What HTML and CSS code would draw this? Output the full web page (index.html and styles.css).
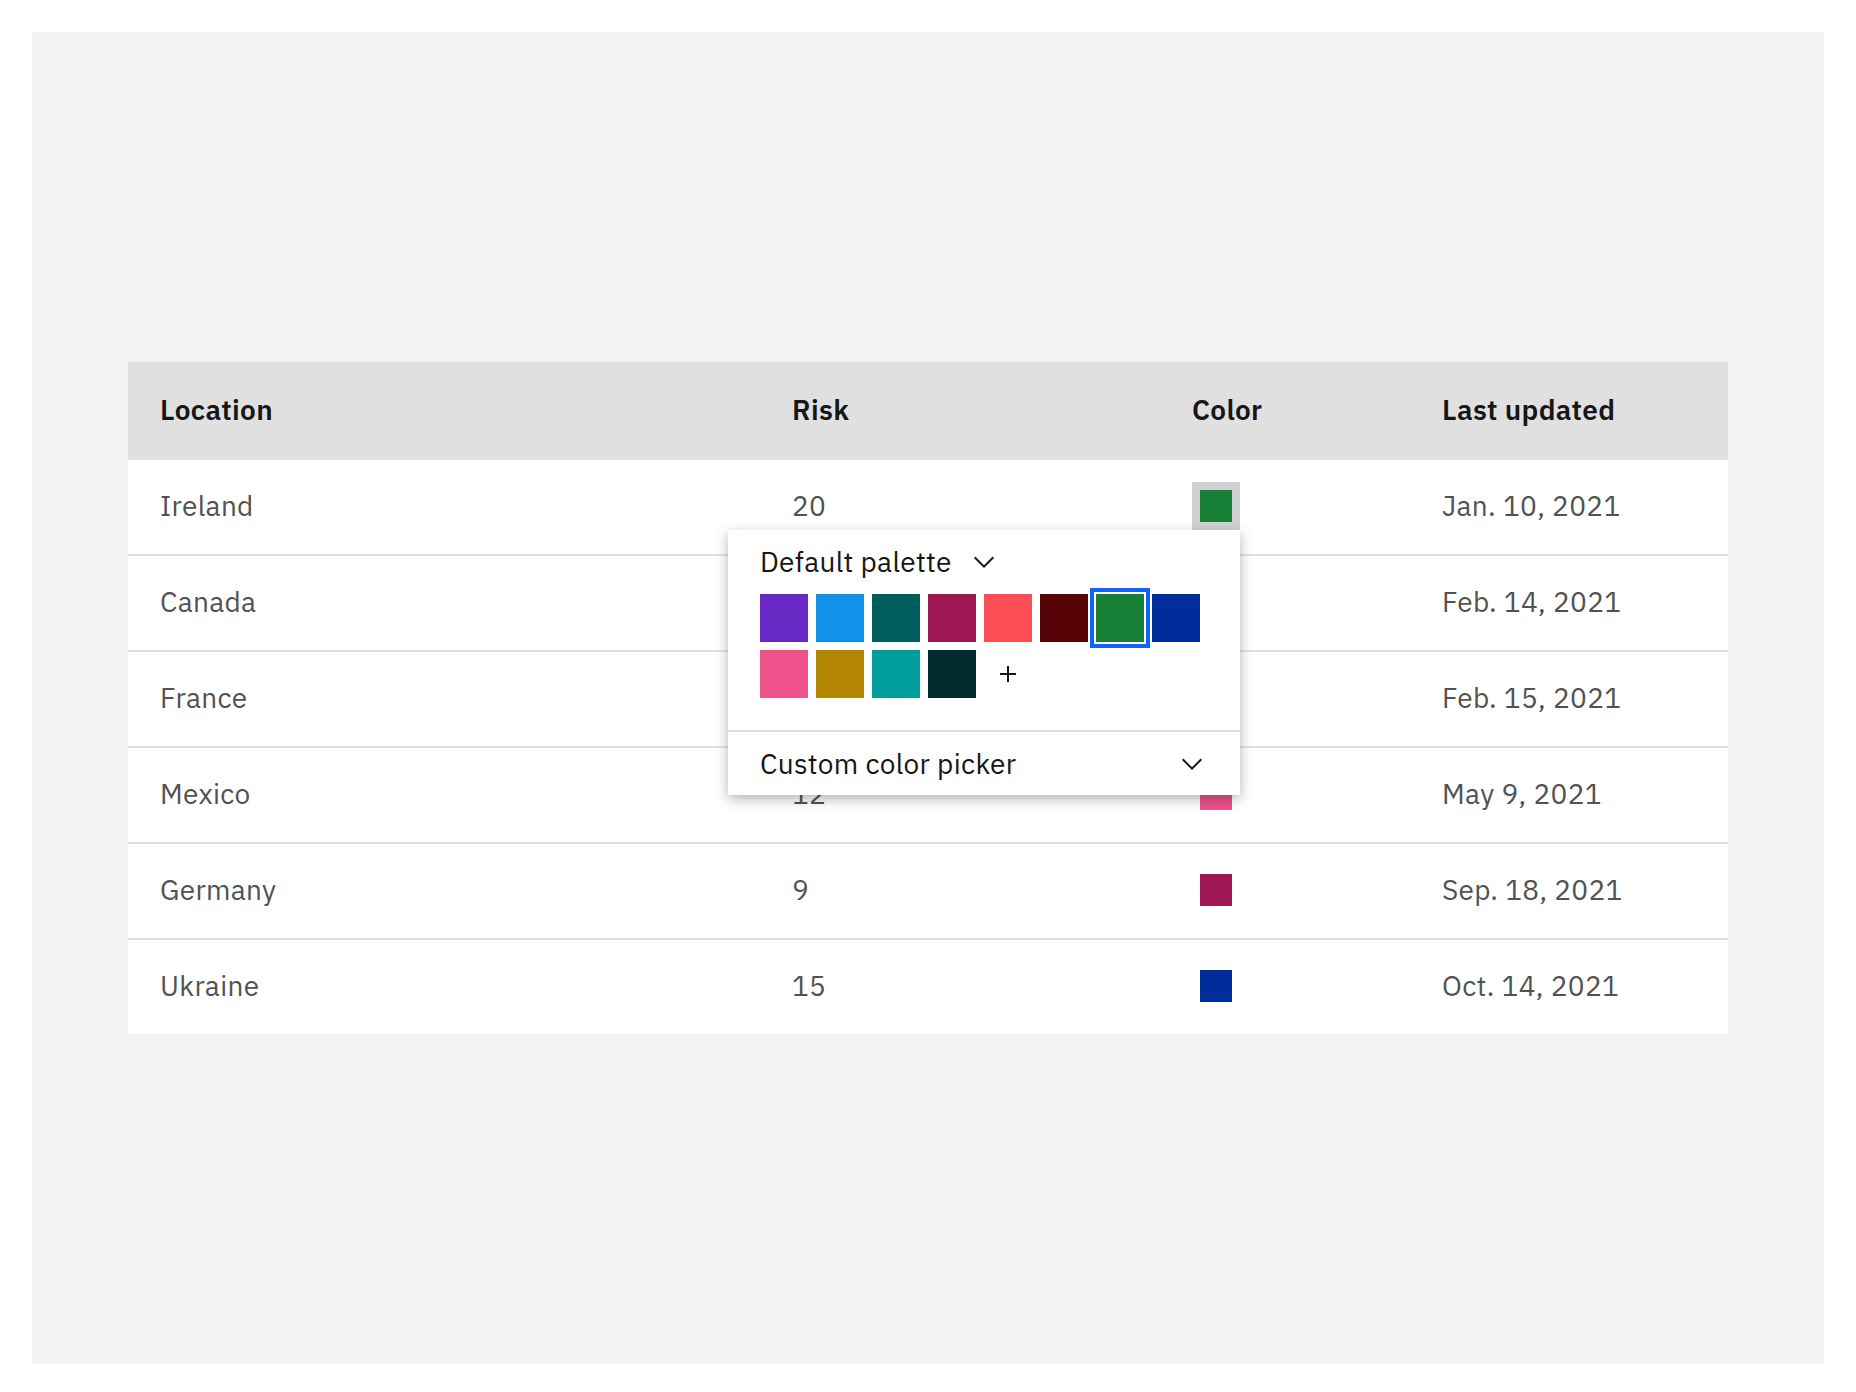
FILE: index.html
```html
<!DOCTYPE html>
<html lang="en">
<head>
<meta charset="utf-8">
<title>Color picker in data table</title>
<link rel="stylesheet" href="styles.css">
</head>
<body>
<main class="panel">
  <table class="data-table">
    <colgroup>
      <col class="col-location">
      <col class="col-risk">
      <col class="col-color">
      <col class="col-updated">
    </colgroup>
    <thead>
      <tr>
        <th>Location</th>
        <th>Risk</th>
        <th>Color</th>
        <th>Last updated</th>
      </tr>
    </thead>
    <tbody>
      <tr>
        <td>Ireland</td>
        <td>20</td>
        <td>
          <div class="swatch-anchor">
            <button class="swatch-btn is-active" type="button" aria-label="Green"><span class="swatch c-green"></span></button>
            <div class="popover">
              <div class="popover-top">
                <div class="palette-head">
                  <span>Default palette</span>
                  <svg class="chev" viewBox="0 0 32 32" width="32" height="32"><path d="M16 22L6 12l1.4-1.4 8.6 8.6 8.6-8.6L26 12z"/></svg>
                </div>
                <div class="palette">
                  <span class="chip c-purple"></span>
                  <span class="chip c-cyan"></span>
                  <span class="chip c-teal"></span>
                  <span class="chip c-magenta"></span>
                  <span class="chip c-red"></span>
                  <span class="chip c-darkred"></span>
                  <span class="chip c-green is-selected"></span>
                  <span class="chip c-blue"></span>
                  <span class="chip c-pink"></span>
                  <span class="chip c-yellow"></span>
                  <span class="chip c-teal50"></span>
                  <span class="chip c-teal90"></span>
                  <span class="add">
                    <svg viewBox="0 0 32 32" width="32" height="32"><path d="M17 15V8h-2v7H8v2h7v7h2v-7h7v-2z"/></svg>
                  </span>
                </div>
              </div>
              <div class="popover-bottom">
                <span>Custom color picker</span>
                <svg class="chev" viewBox="0 0 32 32" width="32" height="32"><path d="M16 22L6 12l1.4-1.4 8.6 8.6 8.6-8.6L26 12z"/></svg>
              </div>
            </div>
          </div>
        </td>
        <td>Jan. 10, 2021</td>
      </tr>
      <tr>
        <td>Canada</td>
        <td>17</td>
        <td><button class="swatch-btn" type="button" aria-label="Cyan"><span class="swatch c-cyan"></span></button></td>
        <td>Feb. 14, 2021</td>
      </tr>
      <tr>
        <td>France</td>
        <td>11</td>
        <td><button class="swatch-btn" type="button" aria-label="Purple"><span class="swatch c-purple"></span></button></td>
        <td>Feb. 15, 2021</td>
      </tr>
      <tr>
        <td>Mexico</td>
        <td>12</td>
        <td><button class="swatch-btn" type="button" aria-label="Pink"><span class="swatch c-pink"></span></button></td>
        <td>May 9, 2021</td>
      </tr>
      <tr>
        <td>Germany</td>
        <td>9</td>
        <td><button class="swatch-btn" type="button" aria-label="Magenta"><span class="swatch c-magenta"></span></button></td>
        <td>Sep. 18, 2021</td>
      </tr>
      <tr>
        <td>Ukraine</td>
        <td>15</td>
        <td><button class="swatch-btn" type="button" aria-label="Blue"><span class="swatch c-blue"></span></button></td>
        <td>Oct. 14, 2021</td>
      </tr>
    </tbody>
  </table>
</main>
</body>
</html>
```

FILE: styles.css
```css
* { box-sizing: border-box; }

html, body {
  margin: 0;
  padding: 0;
  background: #ffffff;
}

body {
  padding: 32px;
  font-family: "IBM Plex Sans", Roboto, "Noto Sans", sans-serif;
  font-size: 28px;
  letter-spacing: 0.32px;
  color: #161616;
}

.panel {
  background: #f4f4f4;
  height: 1332px;
  padding: 330px 96px 0;
}

.data-table {
  width: 100%;
  border-collapse: separate;
  border-spacing: 0;
  table-layout: fixed;
  background: #ffffff;
}

.col-location { width: 632px; }
.col-risk { width: 400px; }
.col-color { width: 250px; }
.col-updated { width: 318px; }

.data-table th {
  height: 96px;
  padding: 0 32px;
  background: #e0e0e0;
  color: #161616;
  font-weight: 600;
  text-align: left;
  vertical-align: middle;
  line-height: 36px;
}

.data-table td {
  height: 96px;
  padding: 0 32px 2px;
  border-top: 2px solid #e0e0e0;
  color: #525252;
  font-weight: 400;
  vertical-align: middle;
  line-height: 36px;
}

.swatch-anchor {
  position: relative;
  width: 48px;
  height: 48px;
}

.swatch-btn {
  display: flex;
  align-items: center;
  justify-content: center;
  width: 48px;
  height: 48px;
  padding: 0;
  border: 0;
  background: transparent;
  cursor: pointer;
}

.swatch-btn.is-active { background: #d1d1d1; }

.swatch {
  display: block;
  width: 32px;
  height: 32px;
}

.c-purple { background: #6929c4; }
.c-cyan { background: #1192e8; }
.c-teal { background: #005d5d; }
.c-magenta { background: #9f1853; }
.c-red { background: #fa4d56; }
.c-darkred { background: #570408; }
.c-green { background: #198038; }
.c-blue { background: #002d9c; }
.c-pink { background: #ee538b; }
.c-yellow { background: #b28600; }
.c-teal50 { background: #009d9a; }
.c-teal90 { background: #022b30; }

.popover {
  position: absolute;
  top: 100%;
  right: 0;
  width: 512px;
  background: #ffffff;
  box-shadow: 0 4px 12px rgba(0, 0, 0, 0.3);
  color: #161616;
  z-index: 2;
}

.popover-top {
  padding: 16px 32px 32px;
}

.palette-head {
  display: flex;
  align-items: center;
  gap: 16px;
  height: 32px;
  line-height: 32px;
}

.chev { display: block; fill: #161616; flex: none; }

.palette {
  display: grid;
  grid-template-columns: repeat(8, 48px);
  grid-auto-rows: 48px;
  gap: 8px;
  margin-top: 16px;
}

.chip { display: block; }

.chip.is-selected {
  box-shadow: 0 0 0 2px #ffffff, 0 0 0 6px #0f62fe;
}

.add {
  display: flex;
  align-items: center;
  justify-content: center;
}

.add svg { fill: #161616; }

.popover-bottom {
  display: flex;
  align-items: center;
  justify-content: space-between;
  height: 65px;
  padding: 0 32px;
  border-top: 2px solid #e0e0e0;
}
```
